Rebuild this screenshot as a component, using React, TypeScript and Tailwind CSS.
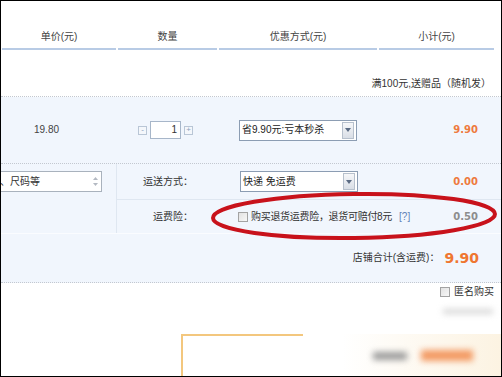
import React from 'react';

const cols = 'grid grid-cols-[116px_101px_160px_117px]';
const num = "font-['DejaVu_Sans',sans-serif] font-bold";

function DropSelect({ label }: { label: string }) {
  return (
    <div className="flex h-[21px] w-[118px] items-center border border-[#8c9db3] bg-white">
      <span className="flex-1 pl-[2px] leading-[12px] text-[#222]">{label}</span>
      <span className="mr-[2px] flex h-[17px] w-[12px] items-center justify-center border border-[#b7c0cc] bg-linear-to-b from-[#f6f7f9] to-[#d9dee6]">
        <svg width="6" height="4" viewBox="0 0 6 4">
          <path d="M0 0h6L3 4z" fill="#5b6b83" />
        </svg>
      </span>
    </div>
  );
}

function StepButton({ sign }: { sign: '-' | '+' }) {
  return (
    <span className="flex h-[9px] w-[9px] items-center justify-center border border-[#b9c6d6] bg-[#f4f7fb] text-[8px] leading-none text-[#8aa0bc]">
      {sign}
    </span>
  );
}

function Checkbox() {
  return <span className="inline-block h-[10px] w-[10px] shrink-0 border border-[#a3a3a3] bg-linear-to-br from-[#e2e2e2] to-[#f7f7f7]" />;
}

export default function App() {
  return (
    <div className="relative h-[377px] w-[502px] overflow-hidden border border-black bg-white font-['Liberation_Sans','Noto_Sans_CJK_SC',sans-serif] text-[10px] text-[#333]">
      {/* column heads */}
      <div className={`${cols} h-[49px]`}>
        {['单价(元)', '数量', '优惠方式(元)', '小计(元)'].map((h) => (
          <div key={h} className="mx-px flex items-end justify-center border-b-2 border-[#b8cbe5] pb-[5px] leading-[12px] text-[#444]">
            {h}
          </div>
        ))}
      </div>

      {/* promo */}
      <div className="flex h-[47px] items-end justify-end border-b border-dotted border-[#c3c8d0] pr-[10px] pb-[6px] leading-[12px]">
        满100元,送赠品（随机发）
      </div>

      <div className="bg-[#f1f6fd]">
        {/* product row */}
        <div className={`${cols} h-[67px] items-center border-b border-dotted border-[#c3c8d0]`}>
          <div className="pl-[33px] leading-[12px] text-[#444]">19.80</div>
          <div className="flex items-center pl-[21px]">
            <StepButton sign="-" />
            <span className="mx-[3px] flex h-[18px] w-[31px] items-center justify-end border border-[#a7b6c9] bg-white pr-[3px] leading-none">1</span>
            <StepButton sign="+" />
          </div>
          <div className="pl-[21px]">
            <DropSelect label="省9.90元:亏本秒杀" />
          </div>
          <div className={`pr-[17px] text-right leading-[12px] text-[#ee7a3e] ${num}`}>9.90</div>
        </div>

        {/* shipping */}
        <div className="grid h-[70px] grid-cols-[115px_1fr] border-b border-[#fafcff]">
          <div className="pt-[7px]">
            <div className="-ml-[3px] flex h-[21px] w-[104px] items-center border border-[#a9b2bd] bg-white">
              <span className="flex-1 pl-[1px] leading-[12px] text-[#333]">、尺码等</span>
              <span className="mr-[3px] flex flex-col items-center gap-[3px]">
                <svg width="5" height="3" viewBox="0 0 5 3"><path d="M0 3L2.5 0 5 3z" fill="#b3b9c2" /></svg>
                <svg width="5" height="3" viewBox="0 0 5 3"><path d="M0 0h5L2.5 3z" fill="#b3b9c2" /></svg>
              </span>
            </div>
          </div>
          <div className="flex flex-col border-l border-[#dfe7f1]">
            <div className="grid h-[36px] grid-cols-[101px_160px_117px] items-center border-b border-[#dfe7f1]">
              <div className="pr-[25px] text-right leading-[12px]">运送方式：</div>
              <div className="pl-[22px]">
                <DropSelect label="快递 免运费" />
              </div>
              <div className={`pr-[17px] text-right leading-[12px] text-[#ee7a3e] ${num}`}>0.00</div>
            </div>
            <div className="grid flex-1 grid-cols-[101px_160px_117px] items-center">
              <div className="pr-[25px] text-right leading-[12px]">运费险：</div>
              <div className="flex items-center gap-[3px] pl-[20px] leading-[12px] whitespace-nowrap">
                <Checkbox />
                <span className="tracking-[-0.3px]">购买退货运费险，退货可赔付8元</span>
                <span className="ml-[4px] text-[#5f82b7]">[?]</span>
              </div>
              <div className={`pr-[17px] text-right leading-[12px] text-[#8d8d8d] ${num}`}>0.50</div>
            </div>
          </div>
        </div>

        {/* shop total */}
        <div className="flex h-[49px] items-center justify-end gap-[5px] border-b border-dotted border-[#c3c8d0] pr-[22px]">
          <span className="leading-[12px]">店铺合计(含运费)：</span>
          <span className={`text-[14px] leading-[16px] text-[#ef7630] ${num}`}>9.90</span>
        </div>
      </div>

      {/* footer */}
      <div className="flex flex-col">
        <div className="flex h-[18px] items-center justify-end gap-[4px] pr-[7px]">
          <Checkbox />
          <span className="leading-[12px] text-[#333]">匿名购买</span>
        </div>
        <div className="mt-[8px] mr-[8px] ml-auto h-[5px] w-[50px] bg-[#d6d6d6] blur-[3px]" />
        <div className="mt-[20px] ml-[180px] h-[42px] border-l-2 border-[#f3c77e] bg-linear-to-r from-white via-white to-[#fcf3e2]">
          <div className="h-[2px] w-[120px] bg-[#f3c77e]" />
          <div className="flex items-center justify-end gap-[14px] pt-[14px] pr-[28px] blur-[3px]">
            <span className="h-[8px] w-[34px] bg-[#9a9a9a]" />
            <span className="h-[11px] w-[52px] bg-[#f39a63]" />
          </div>
        </div>
      </div>

      {/* hand-drawn red ring */}
      <svg className="pointer-events-none absolute top-[189px] left-[207px]" width="294" height="52" viewBox="0 0 294 52">
        <ellipse cx="146" cy="26" rx="141" ry="22" fill="none" stroke="#c8121b" strokeWidth="4" transform="rotate(-0.8 146 26)" />
      </svg>
    </div>
  );
}
